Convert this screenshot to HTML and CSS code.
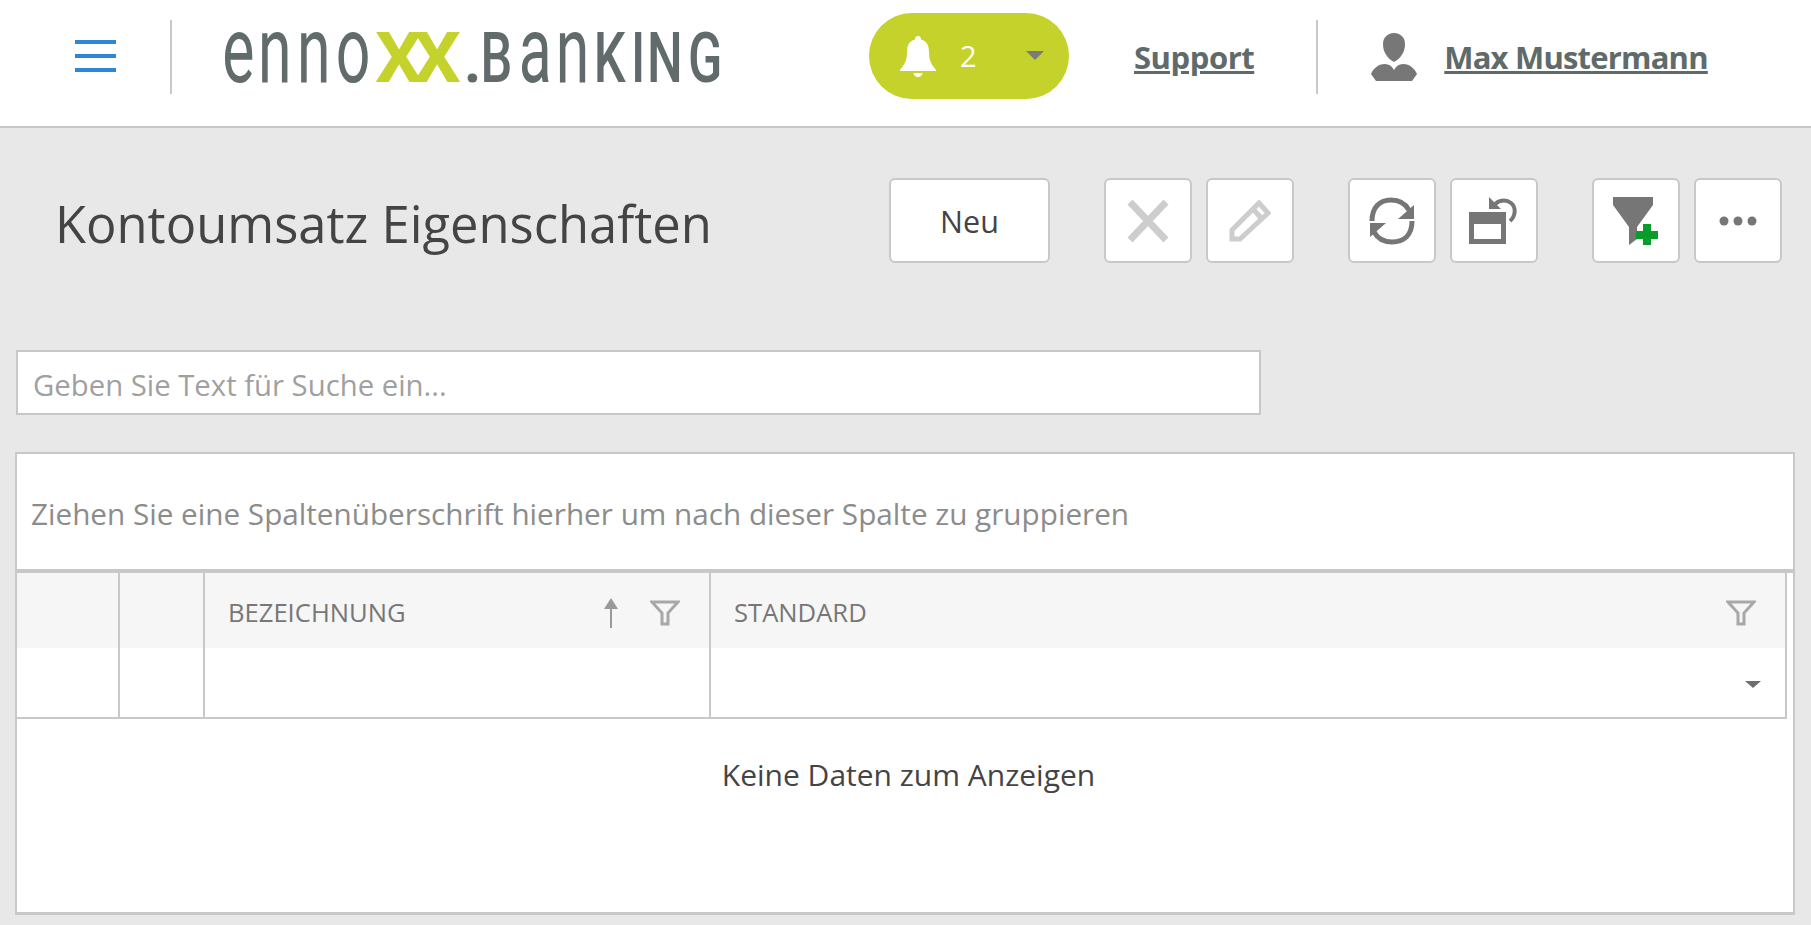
FILE: index.html
```html
<!DOCTYPE html>
<html lang="de">
<head>
  <meta charset="UTF-8" />
  <meta name="viewport" content="width=device-width, initial-scale=1" />
  <title>Kontoumsatz Eigenschaften - ennoXX.Banking</title>
  <link rel="stylesheet" href="styles.css">
</head>
<body>

<header class="topbar">
  <a class="menu-btn" href="#" aria-label="Menü">
    <span></span><span></span><span></span>
  </a>
  <div class="logo">
    <svg width="510" height="60" viewBox="0 0 510 60">
      <g transform="scale(.66 1)">
        <text class="logo-low" x="-4 50 109 168">enno</text>
      </g>
      <g transform="scale(1.080 1)">
        <text class="logo-x" x="139 174">XX</text>
      </g>
      <text class="logo-caps" x="238">.</text>
      <g transform="scale(.72 1)">
        <text class="logo-caps" x="355">B</text>
      </g>
      <g transform="scale(.66 1)">
        <text class="logo-low" x="445 501">an</text>
      </g>
      <g transform="scale(.72 1)">
        <text class="logo-caps" x="512 564 586 643">KING</text>
      </g>
    </svg>
  </div>
  <a class="notify" href="#">
    <svg class="bell" width="38" height="42" viewBox="0 0 38 42">
      <path d="M19 1a3 3 0 0 1 3 3.600C28 6 30 11 30 17c0 8 2 12 7 18v1H1v-1c5-6 7-10 7-18 0-6 2-11 8-12.400A3 3 0 0 1 19 1z"/>
      <path d="M14.500 38h9a4.500 4 0 0 1-9 0z"/>
    </svg>
    <span class="notify-count">2</span>
    <span class="caret"></span>
  </a>
  <a class="top-link" href="#">Support</a>
  <div class="user">
    <svg width="46" height="48" viewBox="0 0 46 48">
      <path d="M23 0c6 0 11 4 11 11 0 8-4 14-11 18-7-4-11-10-11-18C12 4 17 0 23 0z"/>
      <path d="M14 31c4 0 7 2 9 6 2-4 5-6 9-6 7 0 12 5 14 10l-5 7H5l-5-7c2-5 7-10 14-10z"/>
    </svg>
    <a class="top-link" href="#">Max Mustermann</a>
  </div>
</header>

<main class="page">
  <div class="title-row">
    <h1>Kontoumsatz Eigenschaften</h1>
    <div class="toolbar">
      <button class="btn btn-text">Neu</button>
      <div class="btn-group">
        <button class="btn">
          <svg width="42" height="42" viewBox="0 0 42 42"><path class="ico-off-line" d="M3 2l36 38M39 2L3 40"/></svg>
        </button>
        <button class="btn">
          <svg width="42" height="42" viewBox="0 0 42 42"><path class="ico-off-line thin" d="M30 3l9 10L11 39H3V30zM24 9l9 10"/></svg>
        </button>
      </div>
      <div class="btn-group">
        <button class="btn">
          <svg width="48" height="48" viewBox="0 0 48 48">
            <path class="ico-line" d="M4 24C4 10 12 3 23 3c8 0 14 3 18 10M44 24c0 14-8 21-20 21-8 0-14-3-18-10"/>
            <path class="ico-fill" d="M46 8v14H30zM2 40V26h16z"/>
          </svg>
        </button>
        <button class="btn">
          <svg width="52" height="48" viewBox="0 0 52 48">
            <path class="ico-fill" fill-rule="evenodd" d="M1 15h37v32H1zM6 27v15h27V27z"/>
            <path class="ico-line thin" d="M26 9c3-6 12-7 17-3 6 5 4 14-1 18"/>
            <path class="ico-fill" d="M21 0l12 12H21z"/>
          </svg>
        </button>
      </div>
      <div class="btn-group">
        <button class="btn">
          <svg width="46" height="48" viewBox="0 0 46 48">
            <path class="ico-fill" d="M0 0h40v8L24 30v12l-8 6V30L0 8z"/>
            <path class="ico-plus" d="M23 34h7v-7h8v7h7v8h-7v6h-8v-6h-7z"/>
          </svg>
        </button>
        <button class="btn">
          <svg width="38" height="12" viewBox="0 0 38 12">
            <circle class="ico-fill" cx="5" cy="6" r="4.500"/>
            <circle class="ico-fill" cx="19" cy="6" r="4.500"/>
            <circle class="ico-fill" cx="33" cy="6" r="4.500"/>
          </svg>
        </button>
      </div>
    </div>
  </div>

  <input class="search" type="text" placeholder="Geben Sie Text für Suche ein...">

  <section class="grid-panel">
    <div class="group-hint">Ziehen Sie eine Spaltenüberschrift hierher um nach dieser Spalte zu gruppieren</div>
    <div class="grid-table">
      <div class="cell head"></div>
      <div class="cell head"></div>
      <div class="cell head">
        <span class="head-label">BEZEICHNUNG</span>
        <svg class="sort-ico" width="16" height="30" viewBox="0 0 16 30"><path d="M8 0l7 11h-6v19H7V11H1z"/></svg>
        <svg class="filter-ico" width="30" height="26" viewBox="0 0 30 26"><path d="M2 2h26L18 13v11h-6V13z"/></svg>
      </div>
      <div class="cell head">
        <span class="head-label">STANDARD</span>
        <svg class="filter-ico" width="30" height="26" viewBox="0 0 30 26"><path d="M2 2h26L18 13v11h-6V13z"/></svg>
      </div>
      <div class="cell filter"></div>
      <div class="cell filter"></div>
      <div class="cell filter"></div>
      <div class="cell filter filter-select"><span class="caret small"></span></div>
    </div>
    <p class="no-data">Keine Daten zum Anzeigen</p>
  </section>
</main>

</body>
</html>
```

FILE: styles.css
```css
* {
  box-sizing: border-box;
}
html, body {
  height: 100%;
}
body {
  margin: 0;
  font-family: "Open Sans", "Noto Sans", sans-serif;
  background-color: #e8e8e8;
  color: #444;
  overflow: hidden;
}

/* top bar */
.topbar {
  display: flex;
  align-items: center;
  height: 128px;
  padding-bottom: 13px;
  background-color: #fff;
  border-bottom: 2px solid #c8c8c8;
}
.menu-btn {
  display: flex;
  flex-direction: column;
  gap: 10px;
  width: 172px;
  height: 74px;
  padding: 20px 55px 0 75px;
  border-right: 2px solid #c8c8c8;
}
.menu-btn span {
  display: block;
  width: 41px;
  height: 4px;
  background-color: #2f86d6;
}
.logo {
  margin-left: 53px;
  height: 60px;
}
.logo svg {
  display: block;
  overflow: visible;
}
.logo-low {
  font-family: "Roboto", sans-serif;
  font-weight: 400;
  font-size: 92px;
  fill: #626b6b;
}
.logo-caps {
  font-family: "Roboto", sans-serif;
  font-weight: 500;
  font-size: 70px;
  fill: #626b6b;
}
.logo-x {
  font-family: "Roboto", sans-serif;
  font-weight: 700;
  font-size: 70px;
  fill: #c4d22b;
}
.logo text {
  transform: translateY(55px);
}
.notify {
  display: flex;
  align-items: center;
  width: 200px;
  height: 86px;
  margin: 0 0 2px 134px;
  padding-left: 30px;
  border-radius: 43px;
  background-color: #c4d22b;
  color: #fff;
  text-decoration: none;
}
.bell {
  fill: #fff;
}
.notify-count {
  margin-left: 23px;
  font-size: 29px;
}
.caret {
  width: 0;
  height: 0;
  margin-left: 49px;
  border-style: solid;
  border-width: 9px 9px 0;
  border-color: #7a7a7a transparent transparent;
}
.caret.small {
  margin-left: 0;
  border-width: 7px 8px 0;
  border-color: #6f6f6f transparent transparent;
}
.top-link {
  color: #5f6a6a;
  font-size: 31px;
  font-weight: 700;
  letter-spacing: -.8px;
}
.notify + .top-link {
  margin-left: 65px;
  letter-spacing: -.45px;
}
.user {
  display: flex;
  align-items: center;
  gap: 27px;
  height: 74px;
  margin-left: 62px;
  padding-left: 53px;
  border-left: 2px solid #c8c8c8;
}
.user svg {
  fill: #777;
}

/* title and buttons */
.page {
  padding: 0 16px;
}
.title-row {
  display: flex;
  align-items: center;
  justify-content: space-between;
  height: 190px;
  margin-bottom: 32px;
  padding: 0 13px 0 39px;
}
h1 {
  margin: 0;
  font-size: 50.700px;
  font-weight: 400;
  color: #444;
}
.toolbar {
  display: flex;
  gap: 54px;
  margin-top: -5px;
}
.btn-group {
  display: flex;
  gap: 14px;
}
.btn {
  display: flex;
  align-items: center;
  justify-content: center;
  width: 88px;
  height: 85px;
  padding: 0;
  background-color: #fff;
  border: 2px solid #c8c8c8;
  border-radius: 6px;
  font-family: inherit;
  color: #444;
}
.btn-text {
  width: 161px;
  font-size: 30.500px;
}
.ico-fill {
  fill: #767676;
}
.ico-line {
  fill: none;
  stroke: #767676;
  stroke-width: 5;
}
.ico-line.thin {
  stroke-width: 4;
}
.ico-off-line {
  fill: none;
  stroke: #cdcdcd;
  stroke-width: 7;
}
.ico-off-line.thin {
  stroke-width: 5;
}
.ico-plus {
  fill: #0a9c2a;
}

/* search */
.search {
  display: block;
  width: 1245px;
  height: 65px;
  padding: 4px 15px 0;
  background-color: #fff;
  border: 2px solid #c8c8c8;
  font-family: inherit;
  font-size: 29.300px;
  color: #444;
}
.search::placeholder {
  color: #a0a0a0;
  opacity: 1;
}

/* grid */
.grid-panel {
  height: 463px;
  margin: 37px 0 0 -1px;
  width: 1780px;
  background-color: #fff;
  border: 2px solid #c8c8c8;
  border-bottom-width: 3px;
}
.group-hint {
  display: flex;
  align-items: center;
  height: 119px;
  padding: 3px 14px 0;
  border-bottom: 4px solid #c8c8c8;
  font-size: 29.700px;
  color: #8c8c8c;
}
.grid-table {
  display: grid;
  grid-template-columns: 103px 85px 506px 1fr;
  grid-template-rows: 75px 69px;
  margin-right: 6px;
  border-right: 2px solid #c8c8c8;
  border-bottom: 2px solid #c8c8c8;
}
.cell {
  display: flex;
  align-items: center;
  border-right: 2px solid #c8c8c8;
}
.cell:nth-child(4n) {
  border-right: none;
}
.head {
  padding: 4px 0 0 23px;
  background-color: #f6f6f6;
}
.head-label {
  flex: 1;
  font-size: 25.600px;
  color: #777;
}
.sort-ico {
  fill: #9a9a9a;
  margin-right: 31px;
}
.filter-ico {
  fill: none;
  stroke: #a8a8a8;
  stroke-width: 3;
  margin-right: 29px;
}
.filter-select {
  justify-content: flex-end;
  padding: 4px 24px 0 0;
}
.no-data {
  margin: 0;
  padding: 35px 0 0 7px;
  text-align: center;
  font-size: 30px;
  color: #444;
}
```
